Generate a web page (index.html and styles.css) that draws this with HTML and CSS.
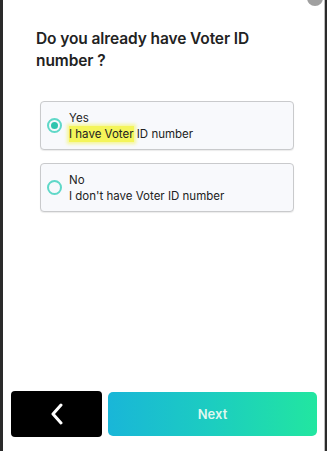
FILE: index.html
```html
<!DOCTYPE html>
<html>
<head>
<meta charset="utf-8">
<link rel="stylesheet" href="styles.css">
</head>
<body>
<div class="frame">
  <div class="corner"></div>
  <main class="screen">
    <h1 class="title">Do you already have Voter ID number ?</h1>
    <div class="options">
      <label class="option selected">
        <span class="radio"><span class="dot"></span></span>
        <span class="texts">
          <span class="label">Yes</span>
          <span class="desc"><mark class="hl">I have Voter</mark> ID number</span>
        </span>
      </label>
      <label class="option">
        <span class="radio"></span>
        <span class="texts">
          <span class="label">No</span>
          <span class="desc">I don't have Voter ID number</span>
        </span>
      </label>
    </div>
    <div class="spacer"></div>
    <div class="actions">
      <button class="back" aria-label="Back">
        <svg width="16" height="22" viewBox="0 0 16 22"><path d="M12 2 L4 11 L12 20" fill="none" stroke="#fff" stroke-width="3" stroke-linecap="round" stroke-linejoin="round"/></svg>
      </button>
      <button class="next">Next</button>
    </div>
  </main>
</div>
</body>
</html>
```

FILE: styles.css
```css
* { box-sizing: border-box; }
html, body { margin: 0; padding: 0; }
body {
  width: 327px;
  height: 451px;
  background: #fff;
  font-family: "Inter", "Noto Sans", sans-serif;
  overflow: hidden;
}
.frame {
  position: relative;
  width: 327px;
  height: 451px;
  background: #2a2a2a;
  padding: 0 2px 0 3px;
  display: flex;
}
.corner {
  position: absolute;
  right: 4px;
  top: -10px;
  width: 16px;
  height: 16px;
  border-radius: 50%;
  background: #a0a0a0;
}
.screen {
  flex: 1;
  background: #fff;
  display: flex;
  flex-direction: column;
  padding: 28px 7px 14px 8px;
  border-right: 1px solid #bbb;
}
.title {
  margin: 0 0 0 25px;
  font-size: 15.5px;
  line-height: 22px;
  font-weight: 600;
  color: #222;
  width: 240px;
  letter-spacing: -0.1px;
}
.options {
  margin: 29px 23px 0 29px;
  display: flex;
  flex-direction: column;
  gap: 13px;
}
.option {
  display: flex;
  align-items: center;
  height: 49px;
  border: 1px solid #c9cacc;
  border-radius: 4px;
  background: #f8f9fc;
  box-shadow: 0 1px 1px rgba(0,0,0,0.08);
  padding: 0 0 0 6px;
}
.radio {
  width: 15px;
  height: 15px;
  border-radius: 50%;
  border: 2px solid #5fd8c8;
  display: flex;
  align-items: center;
  justify-content: center;
  flex: none;
}
.dot {
  width: 7px;
  height: 7px;
  border-radius: 50%;
  background: #2fc4ae;
}
.texts {
  display: flex;
  flex-direction: column;
  margin-left: 7px;
  color: #222;
  font-size: 11.5px;
  line-height: 16px;
}
.label { font-size: 11.5px; }
.hl {
  background: #f4f55a;
  color: #222;
  padding: 1px 0;
  box-shadow: 0 0 3px 2px rgba(244,245,90,0.6);
}
.spacer { flex: 1; }
.actions {
  display: flex;
  gap: 6px;
  margin-left: 0px;
  height: 46px;
  align-items: center;
}
.back {
  width: 91px;
  height: 46px;
  background: #000;
  border: none;
  border-radius: 4px;
  display: flex;
  align-items: center;
  justify-content: center;
  padding: 0;
}
.next {
  flex: 1;
  height: 44px;
  border: none;
  border-radius: 5px;
  background: linear-gradient(90deg, #19b6d8 0%, #1ccdc0 50%, #22e6a0 100%);
  color: #dff7ef;
  font-family: "Inter", "Noto Sans", sans-serif;
  font-size: 13px;
  font-weight: 600;
}
```
